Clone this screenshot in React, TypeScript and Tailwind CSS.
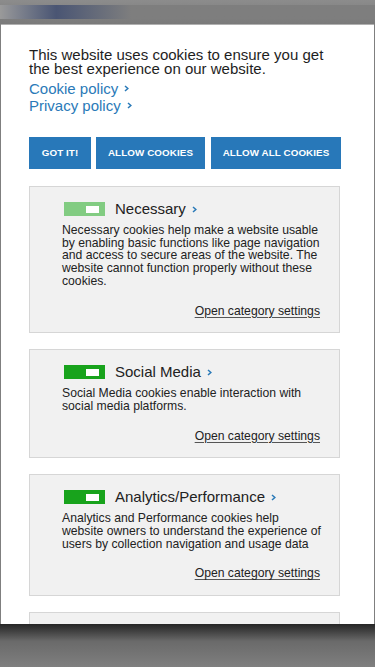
import React from 'react';

const FONT = { fontFamily: '"Liberation Sans", Arial, Helvetica, sans-serif' };

function Chevron({ className = '' }: { className?: string }) {
  return (
    <svg viewBox="0 0 6 8" className={`inline-block w-[5px] h-[7px] ${className}`} aria-hidden>
      <polyline points="1.2,1 4.6,4 1.2,7" fill="none" stroke="#2a7ab8" strokeWidth="1.8" />
    </svg>
  );
}

function Toggle({ disabled }: { disabled?: boolean }) {
  return (
    <div
      className={`w-[41px] h-[14px] flex items-center justify-end pr-[6px] ${
        disabled ? 'bg-[#82cc82]' : 'bg-[#18a31c]'
      }`}
    >
      <div className="w-[13px] h-[7px] bg-white" />
    </div>
  );
}

type Category = { title: string; text: string; disabled?: boolean };

const categories: Category[] = [
  {
    title: 'Necessary',
    disabled: true,
    text: 'Necessary cookies help make a website usable by enabling basic functions like page navigation and access to secure areas of the website. The website cannot function properly without these cookies.',
  },
  {
    title: 'Social Media',
    text: 'Social Media cookies enable interaction with social media platforms.',
  },
  {
    title: 'Analytics/Performance',
    text: 'Analytics and Performance cookies help website owners to understand the experience of users by collection navigation and usage data',
  },
];

function CategoryCard({ cat }: { cat: Category }) {
  return (
    <div className="border border-[#d6d6d6] bg-[#f1f1f1] pl-[32px] pr-[19px] pt-[13px] pb-[15px]">
      <div className="flex items-center h-[18px] pl-[2px]">
        <Toggle disabled={cat.disabled} />
        <span className="ml-[10px] text-[15px] leading-[18px] text-[#222]">{cat.title}</span>
        <Chevron className="ml-[6px] mt-[1px]" />
      </div>
      <p className="mt-[6px] w-[260px] text-[12.2px] leading-[12.7px] text-[#222]">{cat.text}</p>
      <div className="mt-[17px] flex justify-end">
        <span className="text-[12.2px] leading-[12.7px] text-[#222] underline decoration-[#555] underline-offset-[2px]">
          Open category settings
        </span>
      </div>
    </div>
  );
}

export default function App() {
  return (
    <div className="w-[375px] h-[667px] overflow-hidden bg-[#7f7f7f] flex flex-col" style={FONT}>
      {/* blurred page header behind the dialog */}
      <div className="h-[24px] shrink-0 bg-gradient-to-b from-[#8c8c8c] to-[#7a7a7a] flex flex-col justify-center">
        <div className="h-[14px] bg-gradient-to-r from-[#9a9a9a] via-[#4a5573] via-15% to-[#7e7e7e] to-35%" />
      </div>

      {/* dialog */}
      <div className="h-[600px] shrink-0 ml-[1px] w-[373px] bg-white overflow-hidden border-t border-[#b0b0b0]">
        <div className="pl-[28px] pr-[20px] pt-[23px]">
          <p className="w-[300px] text-[15px] leading-[13.5px] text-[#1e1e1e]">
            This website uses cookies to ensure you get the best experience on our website.
          </p>
          <div className="mt-[5px] flex flex-col text-[15px] leading-[17px] text-[#2a7ab8]">
            <span className="flex items-center">
              Cookie policy <Chevron className="ml-[6px]" />
            </span>
            <span className="flex items-center">
              Privacy policy <Chevron className="ml-[6px]" />
            </span>
          </div>

          <div className="mt-[23px] flex text-white font-bold text-[9.8px] tracking-[0.1px]">
            <button className="w-[62px] h-[32px] bg-[#2878b9]">GOT IT!</button>
            <button className="ml-[5px] w-[109px] h-[32px] bg-[#2878b9]">ALLOW COOKIES</button>
            <button className="ml-[6px] w-[130px] h-[32px] bg-[#2878b9]">ALLOW ALL COOKIES</button>
          </div>

          <div className="mt-[17px] w-[311px] flex flex-col gap-[16px]">
            {categories.map((c) => (
              <CategoryCard key={c.title} cat={c} />
            ))}
            <div className="h-[40px] border border-[#d6d6d6] bg-[#f1f1f1]" />
          </div>
        </div>
      </div>

      {/* shadow below dialog */}
      <div className="flex-1 bg-gradient-to-b from-[#262626] via-[#6a6a6a] via-40% to-[#7f7f7f]" />
    </div>
  );
}
